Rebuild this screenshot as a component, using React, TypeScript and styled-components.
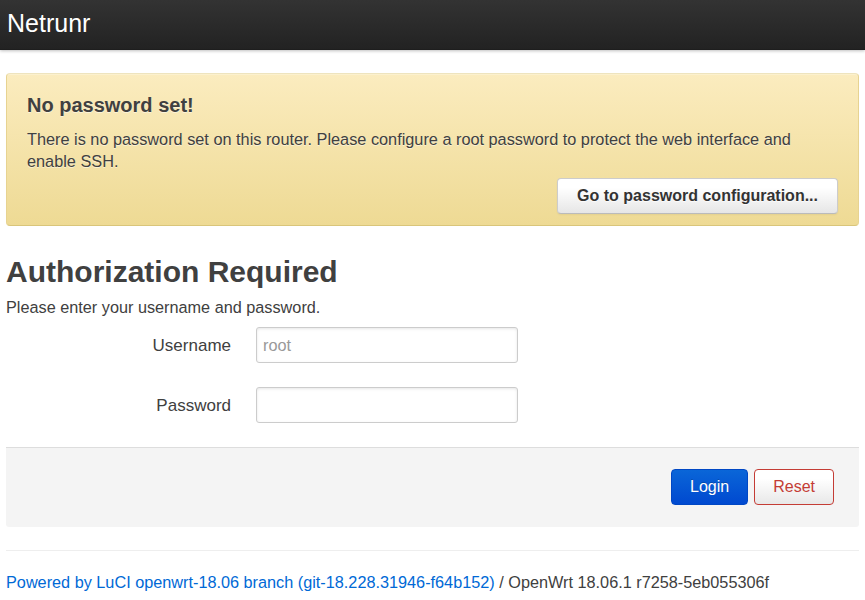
import styled, { createGlobalStyle } from "styled-components";

const GlobalStyle = createGlobalStyle`
  html, body {
    margin: 0;
    padding: 0;
    background: #fff;
  }
  body {
    font-family: "Liberation Sans", Arial, sans-serif;
    font-size: 16px;
    color: #404040;
  }
`;

const Topbar = styled.header`
  height: 50px;
  background: linear-gradient(to bottom, #333 0%, #222 100%);
  box-shadow: 0 1px 3px rgba(0, 0, 0, 0.25), inset 0 -1px 0 rgba(0, 0, 0, 0.1);
  display: flex;
  align-items: center;
  padding: 0 7px;
`;

const Brand = styled.a`
  color: #fff;
  font-size: 25px;
  text-decoration: none;
  margin-top: -4px;
`;

const Main = styled.main`
  padding: 23px 6px 0;
`;

const Alert = styled.div`
  background: linear-gradient(to bottom, #fbecbf 0%, #eeda94 100%);
  border: 1px solid #e7d391;
  border-top-color: #eee4be;
  border-bottom-color: #d9c57a;
  border-radius: 4px;
  box-shadow: inset 0 1px 0 rgba(255, 255, 255, 0.25);
  padding: 19px 20px 11px;
  display: flex;
  flex-direction: column;
  color: #404040;
  text-shadow: 0 1px 0 rgba(255, 255, 255, 0.5);
`;

const AlertTitle = styled.h4`
  margin: 0;
  font-size: 20px;
  line-height: 24px;
  font-weight: bold;
`;

const AlertText = styled.p`
  margin: 11px 0 0;
  font-size: 16.3px;
  line-height: 22px;
`;

const Button = styled.button<{ $tone?: "plain" | "primary" | "danger" }>`
  font-family: inherit;
  font-size: 16px;
  height: 36px;
  padding: 0 18px;
  border-radius: 4px;
  cursor: pointer;
  ${(p) =>
    p.$tone === "primary"
      ? `
    color: #fff;
    background: linear-gradient(to bottom, #0a66d8 0%, #0049d0 100%);
    border: 1px solid #0047c4;
    text-shadow: 0 -1px 0 rgba(0, 0, 0, 0.2);
  `
      : p.$tone === "danger"
      ? `
    color: #c43c35;
    background: linear-gradient(to bottom, #fff 0%, #fff 25%, #e8e8e8 100%);
    border: 1px solid #c43c35;
  `
      : `
    color: #333;
    font-weight: bold;
    padding: 0 19px;
    background: linear-gradient(to bottom, #fff 0%, #fff 25%, #e6e6e6 100%);
    border: 1px solid #ccc;
    border-bottom-color: #bbb;
    text-shadow: 0 1px 1px rgba(255, 255, 255, 0.75);
    box-shadow: inset 0 1px 0 rgba(255, 255, 255, 0.2), 0 1px 2px rgba(0, 0, 0, 0.05);
  `}
`;

const AlertActions = styled.div`
  display: flex;
  justify-content: flex-end;
  margin-top: 6px;
`;

const Heading = styled.h2`
  margin: 28px 0 0;
  font-size: 30px;
  line-height: 36px;
  font-weight: bold;
  color: #404040;
`;

const Intro = styled.p`
  margin: 7px 0 0;
  font-size: 16.25px;
  line-height: 20px;
  color: #404040;
`;

const Form = styled.div`
  display: grid;
  grid-template-columns: 225px 262px;
  column-gap: 25px;
  row-gap: 24px;
  align-items: center;
  margin: 10px 0 0;
`;

const Label = styled.label`
  text-align: right;
  font-size: 17px;
  padding-top: 2px;
  color: #404040;
`;

const Input = styled.input`
  box-sizing: border-box;
  height: 36px;
  width: 262px;
  padding: 0 6px;
  font-family: inherit;
  font-size: 16.25px;
  color: #555;
  border: 1px solid #ccc;
  border-radius: 3px;
  box-shadow: inset 0 1px 3px rgba(0, 0, 0, 0.1);
  outline: none;
  &::placeholder {
    color: #999;
  }
`;

const Actions = styled.div`
  margin-top: 24px;
  background: #f4f4f4;
  border-top: 1px solid #ddd;
  border-radius: 0 0 3px 3px;
  padding: 21px 25px 22px;
  display: flex;
  justify-content: flex-end;
  gap: 6px;
`;

const Rule = styled.hr`
  margin: 23px 0 0;
  border: 0;
  border-top: 1px solid #eee;
`;

const Footer = styled.footer`
  margin: 21px 0 0;
  font-size: 16.25px;
  line-height: 20px;
  color: #404040;
`;

const Link = styled.a`
  color: #0069d6;
  text-decoration: none;
`;

export default function App() {
  return (
    <>
      <GlobalStyle />
      <Topbar>
        <Brand href="#">Netrunr</Brand>
      </Topbar>
      <Main>
        <Alert>
          <AlertTitle>No password set!</AlertTitle>
          <AlertText>
            There is no password set on this router. Please configure a root password to protect the web
            interface and enable SSH.
          </AlertText>
          <AlertActions>
            <Button>Go to password configuration...</Button>
          </AlertActions>
        </Alert>

        <Heading>Authorization Required</Heading>
        <Intro>Please enter your username and password.</Intro>

        <Form>
          <Label htmlFor="user">Username</Label>
          <Input id="user" type="text" placeholder="root" />
          <Label htmlFor="pass">Password</Label>
          <Input id="pass" type="password" />
        </Form>

        <Actions>
          <Button $tone="primary">Login</Button>
          <Button $tone="danger">Reset</Button>
        </Actions>

        <Rule />
        <Footer>
          <Link href="#">Powered by LuCI openwrt-18.06 branch (git-18.228.31946-f64b152)</Link> / OpenWrt
          18.06.1 r7258-5eb055306f
        </Footer>
      </Main>
    </>
  );
}
